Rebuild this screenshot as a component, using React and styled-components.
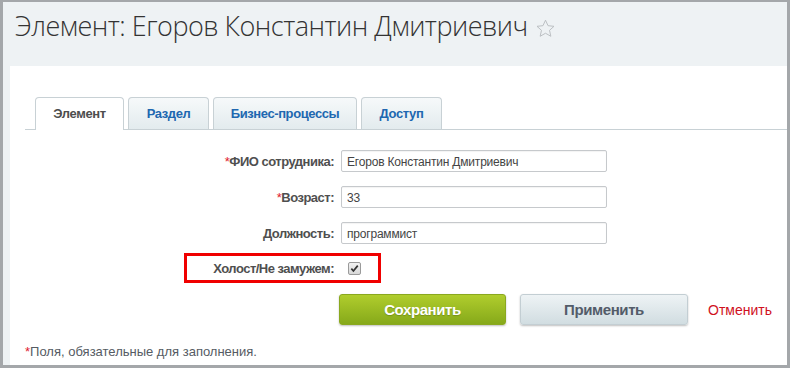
import React from 'react'
import styled, { createGlobalStyle } from 'styled-components'

const GlobalStyle = createGlobalStyle`
  html, body {
    margin: 0;
    padding: 0;
    background: #fff;
  }
  body {
    font-family: "Liberation Sans", Arial, sans-serif;
  }
`

const Frame = styled.div`
  box-sizing: border-box;
  width: 790px;
  height: 368px;
  border: 3px solid #a4a7aa;
  border-top-width: 2px;
  background: #eef2f4;
  display: flex;
  flex-direction: column;
  overflow: hidden;
`

const Header = styled.div`
  height: 64px;
  box-sizing: border-box;
  padding: 10px 0 0 12px;
  display: flex;
  align-items: flex-start;
  gap: 7px;
`

const Title = styled.h1`
  margin: 0;
  font-family: "Open Sans", sans-serif;
  font-weight: 300;
  font-size: 27px;
  letter-spacing: -0.5px;
  line-height: 28px;
  color: #333;
  white-space: nowrap;
`

const Star = styled.svg`
  margin-top: 6px;
  flex: none;
`

const Panel = styled.div`
  flex: 1;
  margin-left: 7px;
  background: #fff;
  padding-top: 31px;
`

const TabBar = styled.div`
  display: flex;
  align-items: flex-end;
  gap: 4px;
  margin-left: 15px;
  padding-left: 10px;
  border-bottom: 1px solid #c8d1d5;
  height: 32px;
`

const Tab = styled.div`
  box-sizing: border-box;
  width: ${(p) => p.$w}px;
  height: ${(p) => (p.$active ? 33 : 32)}px;
  margin-bottom: ${(p) => (p.$active ? -1 : 0)}px;
  border: 1px solid #c8d1d5;
  border-bottom: none;
  border-radius: 4px 4px 0 0;
  background: ${(p) =>
    p.$active ? '#fff' : 'linear-gradient(#f6f9fa, #e3ebee)'};
  color: ${(p) => (p.$active ? '#4d4d4d' : '#2067b0')};
  font-weight: bold;
  font-size: 13px;
  letter-spacing: -0.4px;
  display: flex;
  justify-content: center;
  padding-top: 8px;
`

const Form = styled.div`
  margin-left: 15px;
  padding-top: 20px;
  display: flex;
  flex-direction: column;
`

const Row = styled.div`
  display: flex;
  align-items: center;
  height: 22px;
  margin-bottom: 14px;
`

const Label = styled.label`
  width: 309px;
  flex: none;
  text-align: right;
  font-size: 13px;
  letter-spacing: -0.5px;
  font-weight: bold;
  color: #4f4f4f;
`

const Req = styled.span`
  color: #e0202d;
  font-weight: normal;
`

const Input = styled.div`
  box-sizing: border-box;
  width: 266px;
  height: 22px;
  margin-left: 7px;
  border: 1px solid #c6c9cc;
  border-radius: 2px;
  box-shadow: inset 0 1px 1px rgba(0, 0, 0, 0.05);
  font-size: 12px;
  letter-spacing: -0.2px;
  color: #444;
  padding: 4px 0 0 5px;
`

const CheckRow = styled.div`
  display: flex;
  height: 24px;
  margin-top: -2px;
`

const Highlight = styled.div`
  display: flex;
  align-items: center;
  margin-left: 162px;
  width: 191px;
  outline: 3px solid #f00000;
  padding-right: 17px;
  box-sizing: border-box;
`

const HLabel = styled(Label)`
  width: auto;
  flex: 1;
`

const Checkbox = styled.span`
  box-sizing: border-box;
  width: 13px;
  height: 13px;
  margin-left: 14px;
  border: 1px solid #9a9a9a;
  border-radius: 2px;
  background: linear-gradient(#f2f2f2, #d8d8d8);
  display: flex;
  align-items: center;
  justify-content: center;
`

const Buttons = styled.div`
  display: flex;
  align-items: center;
  margin: 14px 0 0 314px;
  height: 31px;
`

const Button = styled.div`
  box-sizing: border-box;
  width: ${(p) => p.$w}px;
  height: 31px;
  border-radius: 3px;
  display: flex;
  align-items: center;
  justify-content: center;
  font-size: 15px;
  letter-spacing: -0.4px;
  font-weight: bold;
  margin-right: ${(p) => p.$mr || 0}px;
  background: ${(p) =>
    p.$primary
      ? 'linear-gradient(#b0cd2d, #86a91a)'
      : 'linear-gradient(#eef3f5, #d1dde1)'};
  color: ${(p) => (p.$primary ? '#fff' : '#535c69')};
  border: 1px solid ${(p) => (p.$primary ? '#8aa81f' : '#c3ced3')};
  box-shadow: 0 1px 2px rgba(0, 0, 0, 0.25);
  text-shadow: ${(p) => (p.$primary ? '0 1px 1px rgba(0,0,0,0.2)' : 'none')};
`

const Cancel = styled.a`
  font-size: 14px;
  color: #d0111e;
  text-decoration: none;
`

const Footer = styled.div`
  margin-top: 19px;
  font-size: 13px;
  line-height: 16px;
  color: #555b63;
`

const fields = [
  { label: 'ФИО сотрудника:', value: 'Егоров Константин Дмитриевич', req: true },
  { label: 'Возраст:', value: '33', req: true },
  { label: 'Должность:', value: 'программист' },
]

const tabs = [
  { name: 'Элемент', w: 89 },
  { name: 'Раздел', w: 81 },
  { name: 'Бизнес-процессы', w: 144 },
  { name: 'Доступ', w: 81 },
]

export default function App() {
  return (
    <>
      <GlobalStyle />
      <Frame>
        <Header>
          <Title>Элемент: Егоров Константин Дмитриевич</Title>
          <Star width="21" height="21" viewBox="0 0 24 24">
            <path
              d="M12 2.5l2.9 6.3 6.8.7-5.1 4.6 1.5 6.8L12 17.4l-6.1 3.5 1.5-6.8-5.1-4.6 6.8-.7z"
              fill="none"
              stroke="#b9bdc1"
              strokeWidth="1.1"
              strokeLinejoin="round"
            />
          </Star>
        </Header>
        <Panel>
          <TabBar>
            {tabs.map((t, i) => (
              <Tab key={t.name} $w={t.w} $active={i === 0}>
                {t.name}
              </Tab>
            ))}
          </TabBar>
          <Form>
            {fields.map((f) => (
              <Row key={f.label}>
                <Label>
                  {f.req && <Req>*</Req>}
                  {f.label}
                </Label>
                <Input>{f.value}</Input>
              </Row>
            ))}
            <CheckRow>
              <Highlight>
                <HLabel>Холост/Не замужем:</HLabel>
                <Checkbox>
                  <svg width="9" height="9" viewBox="0 0 10 10">
                    <path
                      d="M1.5 5.2l2.3 2.6L8.6 1.8"
                      fill="none"
                      stroke="#333"
                      strokeWidth="1.9"
                    />
                  </svg>
                </Checkbox>
              </Highlight>
            </CheckRow>
            <Buttons>
              <Button $primary $w={167} $mr={14}>
                Сохранить
              </Button>
              <Button $w={168} $mr={20}>
                Применить
              </Button>
              <Cancel href="#">Отменить</Cancel>
            </Buttons>
            <Footer>
              <Req>*</Req>Поля, обязательные для заполнения.
            </Footer>
          </Form>
        </Panel>
      </Frame>
    </>
  )
}
